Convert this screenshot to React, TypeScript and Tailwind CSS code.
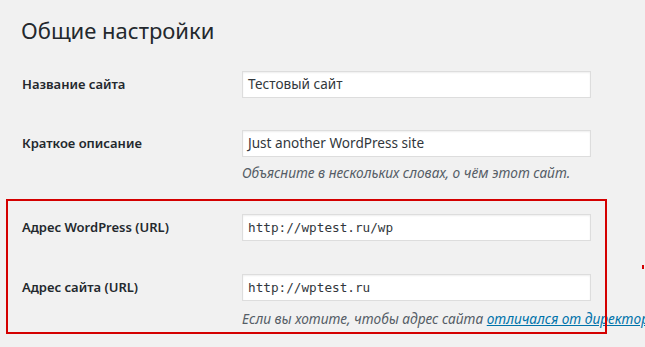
const sans = { fontFamily: '"Noto Sans", "Open Sans", Arial, sans-serif' };

function Field({ value, mono }: { value: string; mono?: boolean }) {
  return (
    <div
      className={
        'w-[349px] h-[27px] bg-white border border-[#dddddd] shadow-[inset_0_1px_2px_rgba(0,0,0,0.07)] flex items-center px-[5px] text-[#32373c] whitespace-nowrap ' +
        (mono ? "font-['DejaVu_Sans_Mono',monospace] text-[12.7px]" : 'text-[13.6px]')
      }
    >
      {value}
    </div>
  );
}

function Row({ label, value, mono }: { label: string; value: string; mono?: boolean }) {
  return (
    <div className="flex items-center">
      <div className="w-[220px] text-[13px] font-semibold text-[#23282d]">{label}</div>
      <Field value={value} mono={mono} />
    </div>
  );
}

export default function App() {
  return (
    <div className="relative w-[645px] h-[347px] overflow-hidden bg-[#f1f1f1] text-[#23282d]" style={sans}>
      <h1 className="ml-[21px] pt-[16px] text-[22px] leading-[29px] font-normal">Общие настройки</h1>

      <div className="ml-[22px] mt-[26px]">
        <Row label="Название сайта" value="Тестовый сайт" />
        <div className="mt-[32px]">
          <Row label="Краткое описание" value="Just another WordPress site" />
        </div>
        <p className="ml-[220px] mt-[7px] text-[13.7px] leading-[17px] italic text-[#555d66] whitespace-nowrap">
          Объясните в нескольких словах, о чём этот сайт.
        </p>
      </div>

      <div className="relative ml-[6px] mt-[18px] w-[601px] h-[135px] pt-[15px] pl-[16px]">
        <Row label="Адрес WordPress (URL)" value="http://wptest.ru/wp" mono />
        <div className="mt-[33px]">
          <Row label="Адрес сайта (URL)" value="http://wptest.ru" mono />
        </div>
        <p className="ml-[220px] mt-[9px] text-[13.7px] leading-[17px] italic text-[#555d66] whitespace-nowrap">
          Если вы хотите, чтобы адрес сайта{' '}
          <a href="#" className="text-[#0073aa] underline">
            отличался от директории установки WordPress
          </a>
          , введите здесь адрес.
        </p>
        <div className="pointer-events-none absolute inset-0 border-2 border-[#d40000]" />
      </div>

      <div className="absolute left-[642px] top-[265px] w-[2px] h-[4px] bg-[#d40000]" />
    </div>
  );
}
